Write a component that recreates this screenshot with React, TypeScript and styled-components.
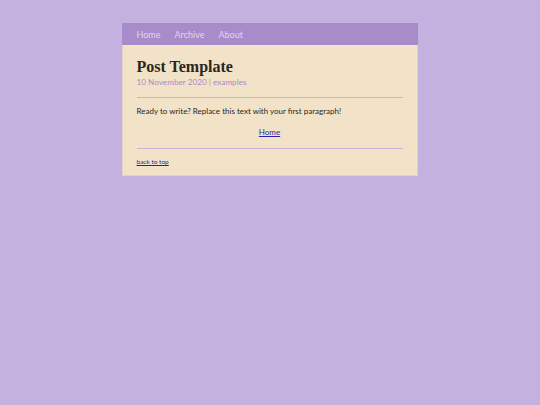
import styled, { createGlobalStyle } from "styled-components";

const Global = createGlobalStyle`
  html, body {
    margin: 0;
    padding: 0;
    background: #c5b1df;
    font-family: "Lato", "DejaVu Sans", sans-serif;
  }
`;

const Page = styled.div`
  padding-top: 23px;
  display: flex;
  justify-content: center;
`;

const Wrapper = styled.div`
  width: 296px;
  margin-left: -1px;
`;

const Nav = styled.nav`
  height: 22px;
  background: #a88bc9;
  display: flex;
  align-items: center;
  gap: 14px;
  padding: 0 15px;
`;

const NavLink = styled.a`
  color: #e3d4f2;
  font-size: 9px;
  text-decoration: none;
`;

const Card = styled.main`
  background: #f2e3c8;
  border: 1px solid #e4d2c6;
  border-top: 0;
  padding: 12px 14px 8px;
`;

const Title = styled.h1`
  margin: 0;
  font-family: "Liberation Serif", serif;
  font-weight: bold;
  font-size: 16px;
  line-height: 20px;
  color: #2a2622;
`;

const Meta = styled.div`
  font-size: 8.2px;
  color: #a88bc9;
`;

const Rule = styled.hr<{ $gap: number }>`
  border: 0;
  border-top: 1px solid #c9b3d8;
  margin: ${(p) => p.$gap}px 0 0;
`;

const Para = styled.p`
  margin: 6px 0 0;
  font-size: 8px;
  color: #2a2622;
  line-height: 14px;
`;

const Center = styled.div`
  text-align: center;
  margin-top: 7px;
  font-size: 8px;
  line-height: 14px;
`;

const Link = styled.a`
  color: #2a1fb0;
`;

const Footer = styled.div`
  margin-top: 8px;
  font-size: 6.5px;
  line-height: 10px;
`;

export default function App() {
  return (
    <>
      <Global />
      <Page>
        <Wrapper>
          <Nav>
            <NavLink href="#">Home</NavLink>
            <NavLink href="#">Archive</NavLink>
            <NavLink href="#">About</NavLink>
          </Nav>
          <Card>
            <Title>Post Template</Title>
            <Meta>10 November 2020 | examples</Meta>
            <Rule $gap={10} />
            <Para>Ready to write? Replace this text with your first paragraph!</Para>
            <Center>
              <Link href="#">Home</Link>
            </Center>
            <Rule $gap={9} />
            <Footer>
              <Link href="#">back to top</Link>
            </Footer>
          </Card>
        </Wrapper>
      </Page>
    </>
  );
}
